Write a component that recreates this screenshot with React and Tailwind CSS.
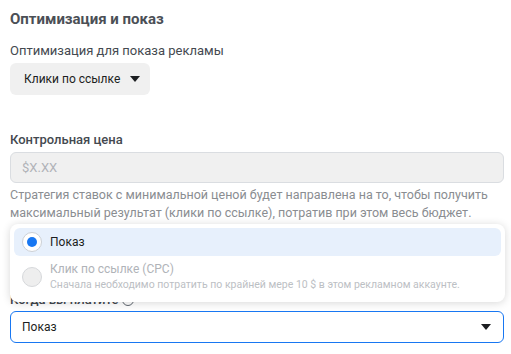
import React from 'react';

const Caret = ({ className = '' }) => (
  <svg width="10" height="6" viewBox="0 0 10 6" className={className}>
    <path d="M0 0h10L5 6z" fill="#1c1e21" />
  </svg>
);

const Radio = ({ checked, disabled }) => (
  <span
    className={
      'flex h-[20px] w-[20px] shrink-0 items-center justify-center rounded-full border ' +
      (disabled ? 'border-[#d6d8db] bg-[#eeeeee]' : 'border-[#ccd0d5] bg-white')
    }
  >
    {checked && <span className="h-[10px] w-[10px] rounded-full bg-[#1877f2]" />}
  </span>
);

const App = () => {
  return (
    <div className="relative h-[354px] w-[511px] overflow-hidden bg-white px-[10px] font-['Roboto',sans-serif]">
      <h2 className="mt-[9px] text-[15px] font-bold leading-5 text-[#4b4f56]">Оптимизация и показ</h2>

      <div className="mt-[12px] text-[13px] leading-5 text-[#444950]">Оптимизация для показа рекламы</div>
      <button className="mt-[2px] flex h-8 items-center gap-[10px] rounded-md bg-[#f0f0f0] pl-[14px] pr-[10px] text-[12px] text-[#1c1e21]">
        Клики по ссылке
        <Caret />
      </button>

      <div className="mt-[35px] text-[13px] font-medium leading-5 text-[#444950]">Контрольная цена</div>
      <div className="mt-[2px] flex h-[31px] w-[494px] items-center rounded-md border border-[#dadde1] bg-[#f0f0f0] px-[11px] text-[13px] text-[#b0b3b8]">
        $X.XX
      </div>
      <p className="mt-[3px] text-[12.5px] leading-[18px] text-[#8a8d91]">
        Стратегия ставок с минимальной ценой будет направлена на то, чтобы получить максимальный результат (клики по ссылке), потратив при этом весь бюджет.
      </p>

      <div className="mt-[68px] flex items-center gap-1 text-[13px] font-medium leading-5 text-[#444950]">
        Когда вы платите
        <span className="flex h-3 w-3 items-center justify-center rounded-full border border-[#606770] text-[8px]">i</span>
      </div>
      <div className="mt-[1px] flex h-[32px] w-[494px] items-center justify-between rounded-md border border-[#1877f2] pl-[11px] pr-[12px] text-[12px] text-[#1c1e21]">
        Показ
        <Caret />
      </div>

      <div className="absolute left-[10px] top-[224px] h-[78px] w-[495px] rounded-lg bg-white p-1 shadow-[0_1px_8px_rgba(0,0,0,0.16)]">
        <div className="flex h-[28px] items-center gap-[8px] rounded-md bg-[#e7f0fc] px-[8px] text-[12px] text-[#1c1e21]">
          <Radio checked />
          Показ
        </div>
        <div className="mt-[5px] flex items-center gap-[8px] px-[8px]">
          <Radio disabled />
          <div>
            <div className="text-[12px] leading-[17px] text-[#b0b3b8]">Клик по ссылке (CPC)</div>
            <div className="text-[10.5px] leading-[14px] text-[#bcc0c4]">
              Сначала необходимо потратить по крайней мере 10 $ в этом рекламном аккаунте.
            </div>
          </div>
        </div>
      </div>
    </div>
  );
};

export default App;
